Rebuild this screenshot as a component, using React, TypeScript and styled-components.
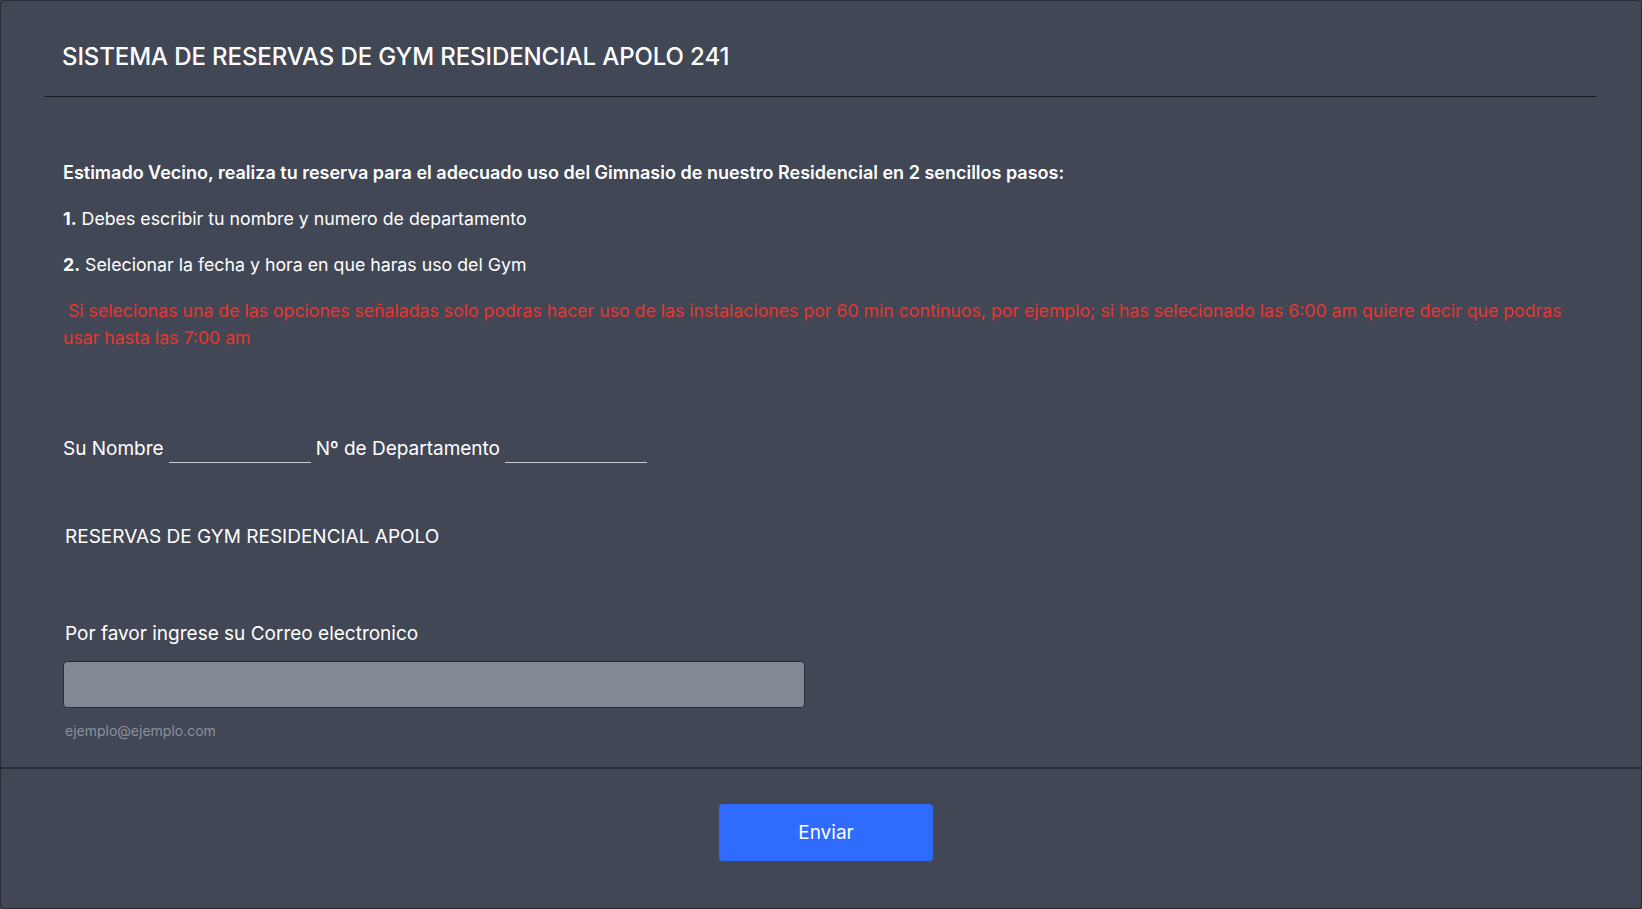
import styled, { createGlobalStyle } from 'styled-components'

const GlobalStyle = createGlobalStyle`
	html, body {
		margin: 0;
		padding: 0;
		background: #424756;
	}
	body {
		font-family: Inter, 'Noto Sans', sans-serif;
		color: #ffffff;
	}
`

const App = () => {
	return (
		<>
			<GlobalStyle />
			<Card>
				<Header>
					<h1>SISTEMA DE RESERVAS DE GYM RESIDENCIAL APOLO 241</h1>
				</Header>

				<Intro>
					<p className='lead'>
						Estimado Vecino, realiza tu reserva para el adecuado uso del
						Gimnasio de nuestro Residencial en 2 sencillos pasos:
					</p>
					<p>
						<b>1.</b> Debes escribir tu nombre y numero de departamento
					</p>
					<p>
						<b>2.</b> Selecionar la fecha y hora en que haras uso del Gym
					</p>
					<Warning>
						&nbsp;Si selecionas una de las opciones señaladas solo podras hacer
						uso de las instalaciones por 60 min continuos, por ejemplo; si has
						selecionado las 6:00 am quiere decir que podras usar hasta las 7:00
						am
					</Warning>
				</Intro>

				<FillRow>
					<span>Su Nombre</span>
					<LineInput />
					<span>Nº de Departamento</span>
					<LineInput />
				</FillRow>

				<SubTitle>RESERVAS DE GYM RESIDENCIAL APOLO</SubTitle>

				<Field>
					<label>Por favor ingrese su Correo electronico</label>
					<TextBox type='email' />
					<small>ejemplo@ejemplo.com</small>
				</Field>

				<Footer>
					<SubmitButton>Enviar</SubmitButton>
				</Footer>
			</Card>
		</>
	)
}

export default App

const Card = styled.div`
	box-sizing: border-box;
	width: 100%;
	height: 909px;
	border: 1px solid #2a2c35;
	border-radius: 4px;
	background: #424756;
	display: flex;
	flex-direction: column;
	overflow: hidden;
`

const Header = styled.header`
	margin: 0 44px;
	padding: 40px 17px 23px;
	border-bottom: 1px solid #1c1d24;

	h1 {
		margin: 0;
		font-size: 24px;
		font-weight: 500;
		line-height: 32px;
		letter-spacing: -0.1px;
	}
`

const Intro = styled.section`
	padding: 62px 62px 0;

	p {
		margin: 0 0 19px;
		font-size: 17.75px;
		line-height: 27px;
	}

	.lead {
		font-size: 18px;
		font-weight: 600;
	}

	b {
		font-weight: 700;
	}
`

const Warning = styled.p`
	&& {
		color: #e8362f;
		font-size: 17.7px;
		margin: 0;
	}
`

const FillRow = styled.div`
	display: flex;
	align-items: baseline;
	gap: 5px;
	padding: 84px 62px 0;
	font-size: 19px;
	line-height: 28px;
`

const LineInput = styled.input`
	width: 142px;
	height: 22px;
	padding: 0;
	border: none;
	border-bottom: 1px solid #c9ccd3;
	background: transparent;
	color: #fff;
	outline: none;
`

const SubTitle = styled.h2`
	margin: 0;
	padding: 61px 64px 0;
	font-size: 19px;
	font-weight: 400;
	line-height: 26px;
`

const Field = styled.div`
	display: flex;
	flex-direction: column;
	align-items: flex-start;
	padding: 71px 62px 0;

	label {
		padding-left: 2px;
		font-size: 19px;
		line-height: 26px;
		margin-bottom: 14px;
	}

	small {
		padding-left: 2px;
		margin-top: 14px;
		font-size: 14px;
		line-height: 18px;
		color: #8b909d;
	}
`

const TextBox = styled.input`
	box-sizing: border-box;
	width: 742px;
	height: 47px;
	border: 1px solid #2a2c35;
	border-radius: 4px;
	background: #838895;
	outline: none;
`

const Footer = styled.footer`
	margin-top: 27px;
	border-top: 2px solid #2a2c35;
	display: flex;
	justify-content: center;
	padding: 35px 0 0 0;
`

const SubmitButton = styled.button`
	width: 214px;
	height: 57px;
	margin-left: 10px;
	border: none;
	border-radius: 4px;
	background: #2f6bff;
	color: #fff;
	font-family: Inter, sans-serif;
	font-size: 19px;
	font-weight: 400;
	cursor: pointer;
`
